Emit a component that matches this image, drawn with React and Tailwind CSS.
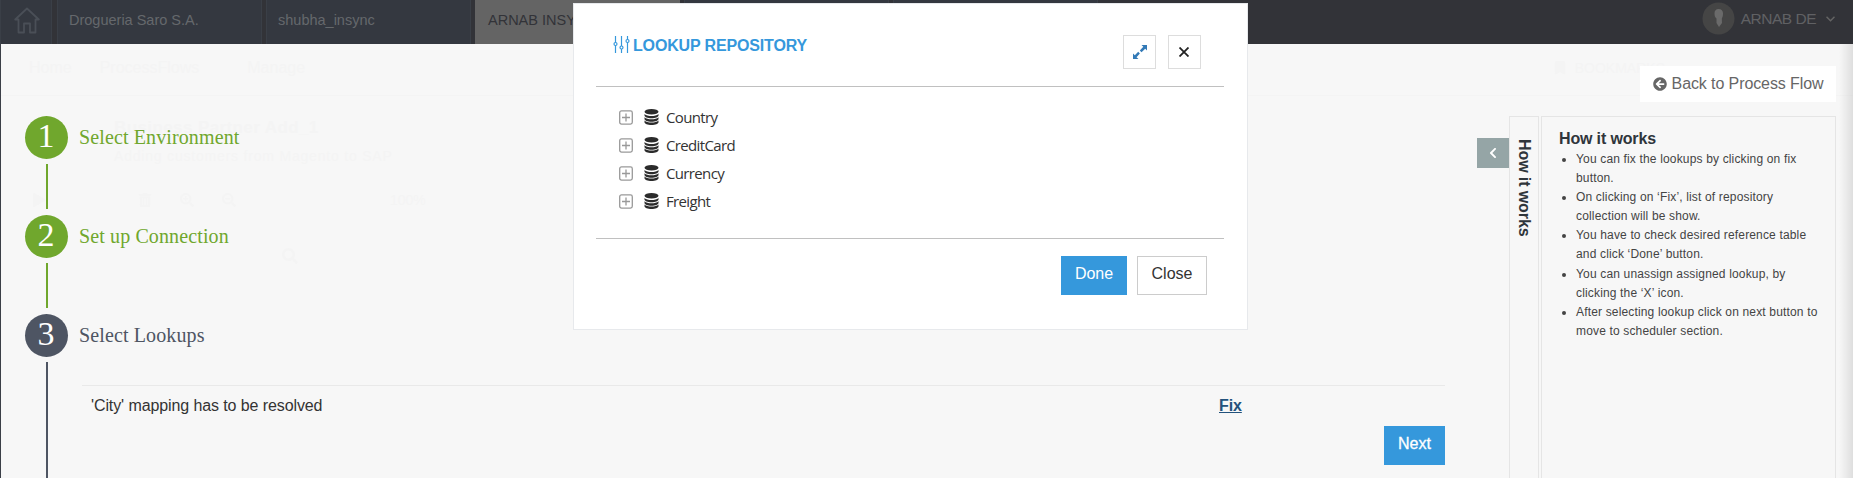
import React from "react";
import { FaArrowCircleLeft, FaChevronLeft, FaBookmark, FaPlay, FaTrashAlt, FaSearchPlus, FaSearchMinus, FaSearch } from "react-icons/fa";

const sans = "font-['Liberation_Sans',Arial,sans-serif]";

function Tab({ children, active }) {
  return (
    <div
      className={
        (active ? "bg-[#646464] pl-[13px] text-[#323338] " : "border-x border-[#3a3f47] bg-[#343840] pl-[11px] text-[#65686c] ") +
        "mr-1 flex h-11 w-[205px] shrink-0 items-center overflow-hidden pb-[3px] text-[14.5px] whitespace-nowrap"
      }
    >
      {children}
    </div>
  );
}

function Navbar() {
  return (
    <header className="relative flex h-11 w-full shrink-0 bg-[#323338]">
      <div className="mr-[5px] flex w-[52px] shrink-0 items-center justify-center border-x border-[#3a3f47] bg-[#343840] pb-1 pl-0.5">
        <svg width="26" height="27" viewBox="0 0 26 27" fill="none" stroke="#4a4f57" strokeWidth="1.8" strokeLinejoin="round">
          <path d="M4.500 12.500H1.200L13 1.500l11.800 11H21.500V25.500H16v-9h-6v9H4.500z" />
        </svg>
      </div>
      <Tab>Drogueria Saro S.A.</Tab>
      <Tab>shubha_insync</Tab>
      <Tab active>ARNAB INSYNC</Tab>
      <Tab />
      <Tab />
      <div className="ml-auto flex items-center pr-[18px] pb-[7px] text-[#606164]">
        <svg width="33" height="33" viewBox="0 0 33 33">
          <circle cx="16.500" cy="16.500" r="16" fill="#454545" />
          <path d="M16.500 7c3 0 4.500 2 4.500 4.500 0 2-.5 4-1.200 5l.2 4.500-3 4-2.500-4v-4.500c-1.500-1-2-3-2-5 0-3 1.500-4.500 4-4.500z" fill="#6a6a6a" />
        </svg>
        <span className="ml-1.5 text-[15.500px] tracking-[-0.5px]">ARNAB DE</span>
        <svg className="ml-2.5" width="9" height="6" viewBox="0 0 9 6" fill="none" stroke="#646464" strokeWidth="1.500">
          <path d="m.5.8 4 4 4-4" />
        </svg>
      </div>
    </header>
  );
}

/* Process designer, showing faintly through the wizard's backdrop */
function Backdrop() {
  return (
    <div className="absolute inset-x-0 top-11 bottom-0 flex flex-col text-[#f4f4f4]" aria-hidden="true">
      <div className="flex h-[52px] shrink-0 items-center border-b border-[#f4f4f4] pr-[188px] pb-1 pl-[29px] text-base">
        <span>Home</span>
        <span className="ml-7">ProcessFlows</span>
        <span className="ml-12">Manage</span>
        <span className="ml-auto flex items-center gap-2 text-sm">
          <FaBookmark /> BOOKMARKS
        </span>
      </div>
      <div className="h-[76px] shrink-0 pt-5 pl-[114px]">
        <div className="text-[17px] leading-6 font-bold tracking-[0.4px]">Business Partner Add_1</div>
        <div className="mt-1.5 text-sm tracking-[0.8px]">Adding customers from Magento to SAP</div>
      </div>
      <div className="flex h-14 shrink-0 items-center gap-7 pl-8 text-sm">
        <FaPlay className="mr-16" />
        <FaTrashAlt />
        <FaSearchPlus />
        <FaSearchMinus />
        <span className="ml-[126px]">100%</span>
      </div>
      <div className="flex h-14 shrink-0 items-center pl-[282px]">
        <FaSearch className="size-4" />
      </div>
    </div>
  );
}

function Step({ n, label, done, last }) {
  return (
    <div className={"flex " + (last ? "h-[164px]" : "h-[99px]")}>
      <div className="flex w-[43px] flex-col items-center">
        <div
          className={
            "flex size-[43px] shrink-0 items-center justify-center rounded-full pr-px pb-1 font-['Liberation_Serif',serif] text-[34px] leading-none text-white " +
            (done ? "bg-[#70a72d]" : "bg-[#4e5563]")
          }
        >
          {n}
        </div>
        <div className={"mt-[5px] w-0.5 shrink-0 " + (done ? "h-[45px] bg-[#70a72d]" : "h-[116px] bg-[#4e5563]")} />
      </div>
      <div
        className={
          "ml-[11px] h-[43px] font-['Liberation_Serif',serif] text-[20px] leading-[43px] tracking-[0.12px] " +
          (done ? "text-[#70a72d]" : "text-[#4e5563]")
        }
      >
        {label}
      </div>
    </div>
  );
}

const tips = [
  "You can fix the lookups by clicking on fix button.",
  "On clicking on ‘Fix’, list of repository collection will be show.",
  "You have to check desired reference table and click ‘Done’ button.",
  "You can unassign assigned lookup, by clicking the ‘X’ icon.",
  "After selecting lookup click on next button to move to scheduler section.",
];

function HelpPanel() {
  return (
    <aside className="flex w-[376px] shrink-0 flex-col">
      <div className="mt-[22px] mr-[17px] ml-auto flex h-9 w-[196px] shrink-0 items-center justify-center gap-[5px] bg-white pb-px text-base tracking-[-0.1px] whitespace-nowrap text-[#666]">
        <FaArrowCircleLeft className="size-3.5 shrink-0" />
        <span>Back to Process Flow</span>
      </div>
      <div className="mt-3.5 flex min-h-0 flex-1 pr-[17px]">
        <div className="mt-[22px] flex h-[30px] w-8 items-center justify-center bg-[#95a5a6] text-white">
          <FaChevronLeft className="size-3" />
        </div>
        <div className="mr-0.5 flex w-[30px] justify-center border border-b-0 border-[#e5e5e5] pt-[22px]">
          <span className="text-base leading-[28px] font-bold tracking-[-0.1px] whitespace-nowrap text-[#2f353b] [writing-mode:vertical-rl]">How it works</span>
        </div>
        <div className="flex-1 border border-b-0 border-[#e5e5e5] pt-3 pl-[17px]">
          <h2 className="text-base leading-5 font-bold tracking-[-0.15px] text-[#2f353b]">How it works</h2>
          <ul className="mt-px list-disc pl-[17px] text-xs leading-[19.1px] tracking-[0.16px] text-[#444]">
            {tips.map((t) => (
              <li key={t} className="w-[245px]">{t}</li>
            ))}
          </ul>
        </div>
      </div>
    </aside>
  );
}

function TreeRow({ label }) {
  return (
    <li className="flex h-7 items-center">
      <svg width="14" height="15" viewBox="0 0 14 15" fill="none" stroke="#999" strokeWidth="1.300">
        <rect x=".7" y=".9" width="12.600" height="13.200" rx="1.800" />
        <path d="M7 3.500v8M3 7.500h8" />
      </svg>
      <svg className="ml-[11px]" width="15" height="16" viewBox="0 0 15 16" fill="#2b2b2b">
        <ellipse cx="7.500" cy="2.800" rx="7" ry="2.800" />
        <path d="M.5 4.900c1.500 1.500 4 2 7 2s5.500-.5 7-2v1.700c0 1.500-3.100 2.700-7 2.700s-7-1.200-7-2.700z" />
        <path d="M.5 8.300c1.500 1.500 4 2 7 2s5.500-.5 7-2V10c0 1.500-3.100 2.700-7 2.700S.5 11.500.5 10z" />
        <path d="M.5 11.600c1.500 1.500 4 2 7 2s5.500-.5 7-2v1.700c0 1.500-3.100 2.700-7 2.700s-7-1.200-7-2.700z" />
      </svg>
      <span className="ml-[7px] font-['Open_Sans',sans-serif] text-[15px] tracking-[-0.65px] text-[#333]">{label}</span>
    </li>
  );
}

function LookupModal() {
  return (
    <div className="absolute top-[3px] left-[573px] flex h-[327px] w-[675px] flex-col border border-[#e7e9ec] bg-white pr-[23px] pl-[22px]">
      <div className="flex h-[83px] shrink-0 border-b border-[#c0c0c0] pr-[23px] pl-[17px]">
        <svg className="mt-8" width="17" height="17" viewBox="0 0 17 17" fill="none" stroke="#3598dc" strokeWidth="1.200">
          <path d="M2.500 0v6.500m0 3V17M8.500 0v10m0 3v4M14.500 0v3.500m0 3V17" />
          <circle cx="2.500" cy="8" r="1.500" />
          <circle cx="8.500" cy="11.500" r="1.500" />
          <circle cx="14.500" cy="5" r="1.500" />
        </svg>
        <h1 className="mt-8 ml-[3px] text-base leading-5 font-bold tracking-[-0.15px] text-[#3598dc]">LOOKUP REPOSITORY</h1>
        <div className="mt-[31px] ml-auto flex gap-3">
          <button className="flex h-[34px] w-[33px] items-center justify-center border border-[#ddd]">
            <svg width="14" height="14" viewBox="0 0 14 14" fill="#337ab7">
              <path d="M8.500 0H14v5.500L12.200 3.700 8.500 7.200 6.800 5.500l3.500-3.700zM5.500 14H0V8.500l1.800 1.800 3.400-3.500 1.700 1.700-3.400 3.700z" />
            </svg>
          </button>
          <button className="flex h-[34px] w-[33px] items-center justify-center border border-[#ddd] pr-px">
            <svg width="10" height="10" viewBox="0 0 10 10" stroke="#222" strokeWidth="1.800">
              <path d="m.5.5 9 9m0-9-9 9" />
            </svg>
          </button>
        </div>
      </div>
      <ul className="h-[152px] shrink-0 border-b border-[#c0c0c0] pt-4 pl-[23px]">
        {["Country", "CreditCard", "Currency", "Freight"].map((l) => (
          <TreeRow key={l} label={l} />
        ))}
      </ul>
      <div className="mt-[17px] flex justify-end gap-2.5 pr-[17px] text-base">
        <button className="h-[39px] w-[66px] bg-[#3598dc] pb-[3px] text-white">Done</button>
        <button className="h-[39px] w-[70px] border border-[#ccc] pb-[3px] text-[#333]">Close</button>
      </div>
    </div>
  );
}

export default function App() {
  return (
    <div className={"relative flex h-[478px] w-[1853px] flex-col overflow-hidden bg-[#f7f7f7] " + sans}>
      <Backdrop />
      <Navbar />
      <div className="relative flex min-h-0 flex-1 border-l border-[#3b3f47]">
        <main className="relative flex flex-1 pt-[72px] pl-6">
          <div>
            <Step n="1" label="Select Environment" done />
            <Step n="2" label="Set up Connection" done />
            <Step n="3" label="Select Lookups" last />
          </div>
          <div className="absolute top-[341px] left-[81px] w-[1363px] border-t border-[#e9e9e9]">
            <div className="flex h-10 items-start pt-2 pl-[9px] text-base tracking-[-0.1px] text-[#333]">
              <span className="w-[1128px]">'City' mapping has to be resolved</span>
              <a className="font-bold text-[#23527c] underline">Fix</a>
            </div>
            <button className="ml-auto block h-[39px] w-[61px] bg-[#3598dc] pb-[3px] text-base text-white [-webkit-text-stroke:0.3px_white]">Next</button>
          </div>
        </main>
        <HelpPanel />
      </div>
      <div className="absolute top-11 right-0 bottom-0 w-3.5 bg-gradient-to-r from-transparent to-black/10" />
      <LookupModal />
    </div>
  );
}
